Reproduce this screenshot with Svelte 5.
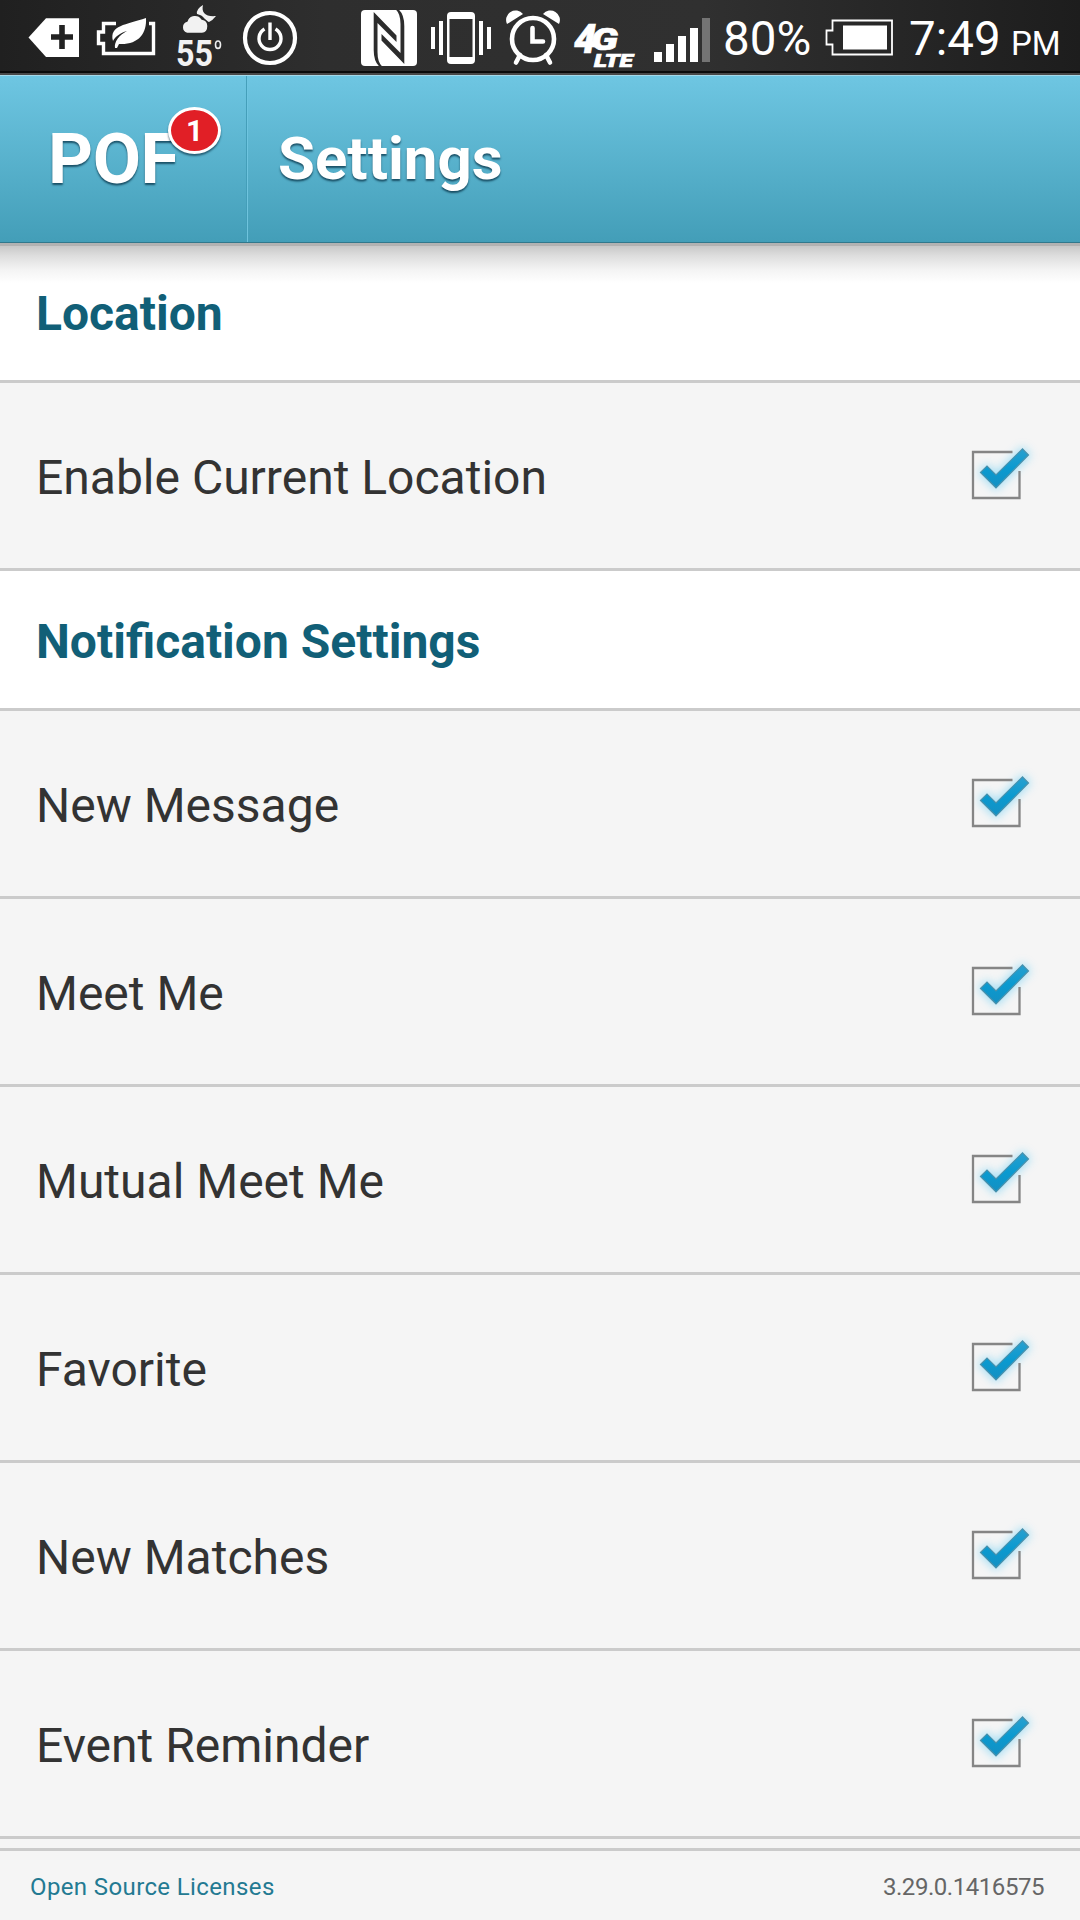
<script>
    const sections = [
        { title: "Location", items: ["Enable Current Location"] },
        {
            title: "Notification Settings",
            items: [
                "New Message",
                "Meet Me",
                "Mutual Meet Me",
                "Favorite",
                "New Matches",
                "Event Reminder",
            ],
        },
    ];

    let enabled = $state({
        "Enable Current Location": true,
        "New Message": true,
        "Meet Me": true,
        "Mutual Meet Me": true,
        "Favorite": true,
        "New Matches": true,
        "Event Reminder": true,
    });

    function toggle(name) {
        enabled[name] = !enabled[name];
    }
</script>

<div class="screen">
    <div class="status">
        <svg width="88" height="71" viewBox="0 0 88 71">
            <path d="M28.5 37.5 46 18.3H79V57H46Z" fill="#fff" />
            <path d="M62 25v24M51 37h22" stroke="#222" stroke-width="5.6" />
        </svg>
        <svg width="76" height="71" viewBox="88 0 76 71">
            <path
                d="M116 23.5H103.5V32H98.5V43.5H103.5V53.5H153.5V23.5H149"
                fill="none"
                stroke="#fff"
                stroke-width="3.4"
            />
            <path
                d="M146 18C147 34 138 45 119 44L117 48H115C114 42 119 35 127 31C120 33 115 37 113 41C109 25 126 25 146 18Z"
                fill="#fff"
            />
        </svg>
        <svg width="70" height="71" viewBox="164 0 70 71">
            <path d="M203 5q-7 4-6 9q5 1 7 4q2 3 5 4q4-2 7-6c-10 1-15-3-13-11Z" fill="#f2f2f2" />
            <path
                d="M187 33.500a6.500 6.500 0 0 1 0-12.500a8.500 8.500 0 0 1 15-2q6 1 6 7q0 7-6 7.500Z"
                fill="#f2f2f2"
                stroke="#282828"
                stroke-width="1.4"
            />
            <text x="176" y="65.7" class="temp" textLength="37" lengthAdjust="spacingAndGlyphs">55</text>
            <ellipse cx="218" cy="44.7" rx="2.5" ry="3.7" fill="none" stroke="#eee" stroke-width="1.6" />
        </svg>
        <svg width="106" height="71" viewBox="234 0 106 71">
            <circle cx="270" cy="38" r="25" fill="none" stroke="#fff" stroke-width="4.2" />
            <path
                d="M264.5 29a11 11 0 1 0 11 0M270 22.5v17.5"
                fill="none"
                stroke="#fff"
                stroke-width="3.4"
            />
        </svg>
        <svg width="80" height="71" viewBox="340 0 80 71">
            <rect x="361" y="10" width="56" height="56" rx="4" fill="#fff" />
            <path
                d="M373.7 12L396.5 35.5V42L377.5 23V52Q377.5 62 382 66.2H379Q373.7 61 373.7 50ZM404.3 64L381.5 40.5V34L400.5 53V24Q400.5 14 396 9.8H399Q404.3 15 404.3 26Z"
                fill="#2c2c2c"
            />
        </svg>
        <svg width="80" height="71" viewBox="420 0 80 71">
            <path d="M433 27v22M441 21v34M481 21v34M489 27v22" stroke="#fff" stroke-width="4" />
            <path
                fill-rule="evenodd"
                d="M451 12h20q4 0 4 4v44q0 4-4 4h-20q-4 0-4-4V16q0-4 4-4ZM449.5 19v38h23V19Z"
                fill="#fff"
            />
        </svg>
        <svg width="70" height="71" viewBox="500 0 70 71">
            <circle cx="533" cy="39" r="21" fill="none" stroke="#fff" stroke-width="4.6" />
            <path d="M507 24a9.5 9.5 0 0 1 16-10ZM559 24a9.5 9.5 0 0 0-16-10Z" fill="#fff" />
            <path
                d="M532.5 28v13.5h10.5M520 55l-4 7.5M546 55l4 7.5"
                fill="none"
                stroke="#fff"
                stroke-width="4.6"
                stroke-linecap="round"
            />
        </svg>
        <svg width="75" height="71" viewBox="570 0 75 71">
            <text x="574" y="52.5" class="net" font-size="40">4</text>
            <text x="591" y="49.5" class="net" font-size="31" textLength="27" lengthAdjust="spacingAndGlyphs">G</text>
            <text x="594" y="66.5" class="net" font-size="18" textLength="39" lengthAdjust="spacingAndGlyphs">LTE</text>
        </svg>
        <svg width="75" height="71" viewBox="645 0 75 71">
            <path d="M654 52h8v10h-8ZM666 44h8v18h-8ZM678 36h8v26h-8ZM690 28h8v34h-8Z" fill="#fff" />
            <path d="M702 18h8v44h-8Z" fill="#747474" />
        </svg>
        <span class="percent">80%</span>
        <svg width="80" height="71" viewBox="820 0 80 71">
            <path d="M832.5 20.5H892V54.5H832.5V44.5H826.5V30.5H832.5Z" fill="none" stroke="#fff" stroke-width="1.8" />
            <rect x="843" y="25.5" width="44" height="24" fill="#fff" />
        </svg>
        <span class="time">7:49</span>
        <span class="ampm">PM</span>
    </div>

    <header class="header">
        <button class="home">
            <span class="logo">POF</span>
            <span class="badge">1</span>
        </button>
        <h1>Settings</h1>
    </header>

    <main class="list">
        {#each sections as section}
            <h2>{section.title}</h2>
            {#each section.items as item}
                <button class="row" onclick={() => toggle(item)}>
                    <span class="label">{item}</span>
                    <svg class="check" width="80" height="80" viewBox="960 436 80 80">
                        <defs>
                            <filter id="glow" x="-50%" y="-50%" width="200%" height="200%">
                                <feGaussianBlur stdDeviation="5" />
                            </filter>
                            <linearGradient id="tick" x1="0" y1="0" x2="0" y2="1">
                                <stop offset="0" stop-color="#2a9fce" />
                                <stop offset="0.5" stop-color="#0a9ad0" />
                                <stop offset="1" stop-color="#1490c2" />
                            </linearGradient>
                        </defs>
                        {#if enabled[item]}
                            <path
                                d="M980 472.5 987 465.5 996 474.5 1022.5 448.5 1029 455 996 488.5Z"
                                fill="#7fd4f5"
                                stroke="#7fd4f5"
                                stroke-width="3"
                                opacity="0.7"
                                filter="url(#glow)"
                            />
                            <path
                                d="M1012.5 452H973V498H1019.5V471"
                                fill="none"
                                stroke="#858585"
                                stroke-width="2.3"
                            />
                            <path
                                d="M980.5 472.5 987 466 996 475 1022.5 448.8 1028.5 455 996 487.8Z"
                                fill="url(#tick)"
                                stroke="#4a91ac"
                                stroke-width="1.2"
                            />
                        {:else}
                            <rect x="973" y="452" width="46.5" height="46" fill="none" stroke="#858585" stroke-width="2.3" />
                        {/if}
                    </svg>
                </button>
            {/each}
        {/each}
    </main>

    <footer class="footer">
        <a href="#licenses">Open Source Licenses</a>
        <span class="version">3.29.0.1416575</span>
    </footer>
</div>

<style>
    :global(body) {
        margin: 0;
        background: #f5f5f5;
    }

    .screen {
        width: 1080px;
        height: 1920px;
        overflow: hidden;
        display: flex;
        flex-direction: column;
        background: #f5f5f5;
        font-family: Roboto, sans-serif;
    }

    button {
        border: 0;
        padding: 0;
        background: none;
        font: inherit;
        text-align: left;
    }

    .status {
        height: 75px;
        box-sizing: border-box;
        display: flex;
        flex: none;
        color: #fff;
        white-space: nowrap;
        background:
            linear-gradient(#0b0b0b 0 2px, #484848 2px 4px) 0 71px / 100% 4px no-repeat,
            linear-gradient(90deg, #202020, #2e2e2e 30%, #303030 65%, #1d1d1d);
    }

    .status svg {
        flex: none;
        overflow: visible;
    }

    .temp {
        font: 700 36px Roboto, sans-serif;
        fill: #f2f2f2;
    }

    .net {
        font-family: Roboto, sans-serif;
        font-weight: 900;
        font-style: italic;
        fill: #fff;
        stroke: #fff;
        stroke-width: 0.7px;
    }

    .percent,
    .time,
    .ampm {
        font-size: 47.5px;
        line-height: 79px;
        height: 71px;
    }

    .percent {
        width: 97px;
        padding-left: 3px;
    }

    .time {
        width: 102px;
        padding-left: 9px;
    }

    .ampm {
        font-size: 33px;
        line-height: 88px;
    }

    .header {
        height: 168px;
        box-sizing: border-box;
        flex: none;
        display: flex;
        border-top: 1px solid #a4d9ea;
        border-bottom: 1px solid #31788c;
        background: linear-gradient(#6ec6e2, #439eb8);
        color: #fff;
    }

    .home {
        position: relative;
        width: 248px;
        box-sizing: border-box;
        padding-left: 48px;
        color: #fff;
        background:
            linear-gradient(#459fba, #439eb8) 246px 0 / 1px 100% no-repeat,
            linear-gradient(#6ec6e2, #6fc3dc) 247px 0 / 1px 100% no-repeat;
    }

    .logo {
        display: block;
        font-size: 70px;
        font-weight: 700;
        line-height: 70px;
        letter-spacing: -0.4px;
        text-shadow: 0 2px 2px rgba(0, 40, 60, 0.7);
    }

    .badge {
        position: absolute;
        left: 168px;
        top: 31px;
        width: 47px;
        height: 41px;
        border: 3px solid #fff;
        border-radius: 50%;
        background: #e11f26;
        box-shadow: 0 2px 2px rgba(0, 40, 60, 0.6);
        font-size: 30px;
        font-weight: 700;
        line-height: 41px;
        text-align: center;
    }

    h1 {
        margin: 0;
        padding-left: 30px;
        font-size: 60px;
        line-height: 166px;
        font-weight: 700;
        text-shadow: 0 2px 2px rgba(0, 40, 60, 0.7);
    }

    h2 {
        margin: 0;
        height: 140px;
        box-sizing: border-box;
        border-bottom: 3px solid #cbcbcb;
        padding-left: 36px;
        font-size: 48px;
        line-height: 142px;
        font-weight: 700;
        color: #115f77;
        background: #fff;
    }

    /* shadow cast by the header */
    h2:first-child {
        background: linear-gradient(#b2b2b2 3px, #c8c8c8 3px, #dedede 13px, #f4f4f4 27px, #fff 40px);
    }

    .row {
        display: flex;
        align-items: center;
        justify-content: space-between;
        width: 100%;
        height: 188px;
        box-sizing: border-box;
        border-bottom: 3px solid #cbcbcb;
        padding: 0 40px 0 36px;
        background: #f5f5f5;
        font-size: 48px;
        color: #333;
    }

    .label {
        padding-top: 3px;
    }

    .footer {
        flex: 1;
        margin-top: 9px;
        border-top: 3px solid #cbcbcb;
        display: flex;
        justify-content: space-between;
        padding: 0 36px 0 30px;
        font-size: 24px;
        line-height: 72px;
        color: #666;
    }

    .footer a {
        color: #237a92;
        text-decoration: none;
        letter-spacing: 0.38px;
    }

    .version {
        letter-spacing: -0.45px;
    }
</style>
